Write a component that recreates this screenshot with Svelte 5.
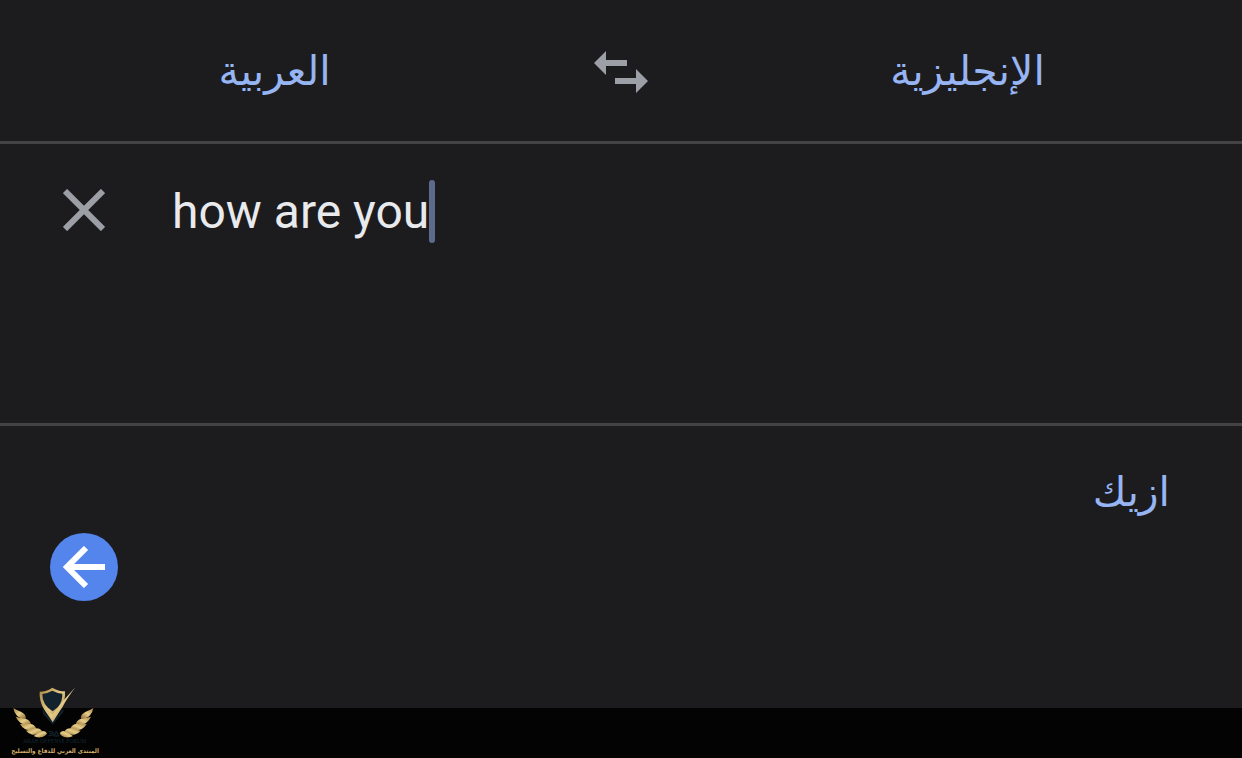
<script lang="ts">
	let source = $state('how are you');
	let languages = $state(['العربية', 'الإنجليزية']);

	const result = 'ازيك';

	// Leaves of one side of the laurel, the other side is mirrored
	const leaves = [
		'M40 114 Q46 119 64 126 Q80 134 77 147 Q58 146 50 136 Q42 127 40 114Z',
		'M47 140 Q58 143 76 146 Q93 151 93 165 Q75 168 62 159 Q52 151 47 140Z',
		'M60 162 Q72 163 89 161 Q106 163 109 177 Q92 184 76 178 Q66 173 60 162Z',
		'M78 182 Q89 180 103 175 Q120 172 126 184 Q114 196 97 194 Q86 192 78 182Z',
		'M101 198 Q110 192 120 185 Q134 179 141 190 Q135 201 121 202 Q110 203 101 198Z'
	];

	function swap() {
		languages = [languages[1], languages[0]];
	}

	function clear() {
		source = '';
	}
</script>

<svelte:head>
	<title>Translate</title>
</svelte:head>

<main class="translator">
	<header class="languages">
		<button class="language" lang="ar" dir="rtl">{languages[0]}</button>
		<button class="swap" aria-label="Swap languages" onclick={swap}>
			<svg viewBox="0 0 54 42" fill="currentColor">
				<path d="M0 12 12 0V9H33V15H12V24Z"></path>
				<path d="M54 30 42 18V27H21V33H42V42Z"></path>
			</svg>
		</button>
		<button class="language" lang="ar" dir="rtl">{languages[1]}</button>
	</header>

	<section class="source">
		<button class="clear" aria-label="Clear text" onclick={clear}>
			<svg viewBox="0 0 42 42" stroke="currentColor" stroke-width="6">
				<path d="M2 2 40 40M40 2 2 40"></path>
			</svg>
		</button>
		<div class="field">
			<input class="source-text" type="text" size="10" aria-label="Text to translate" bind:value={source} />
			<span class="caret"></span>
		</div>
	</section>

	<section class="result">
		<button class="go" aria-label="Open translation">
			<svg viewBox="0 0 42 42" fill="none" stroke="currentColor" stroke-width="6">
				<path d="M42 21H3M23 2 4 21 23 40"></path>
			</svg>
		</button>
		<p class="result-text" lang="ar" dir="rtl">{result}</p>
	</section>

	<footer class="bottom-bar"></footer>

	<!-- Forum watermark -->
	<svg class="watermark" viewBox="0 0 360 264" role="img" aria-label="Arab Defense Forum">
		<defs>
			<linearGradient id="gold" x1="0" y1="0" x2="1" y2="1">
				<stop offset="0" stop-color="#a8843f"></stop>
				<stop offset="0.5" stop-color="#e6cd88"></stop>
				<stop offset="1" stop-color="#8a672f"></stop>
			</linearGradient>
		</defs>
		<path d="M126 115 158 154 190 115 190 126 158 164 129 132Z" fill="#11212c"></path>
		<path d="M157 53Q174 64 195 64Q197 90 183 116L158 156 132 118Q117 91 119 65Q140 65 157 53Z" fill="url(#gold)"></path>
		<path d="M157 62Q172 70 187 71Q188 94 174 111L158 124Q126 104 127 72Q143 70 157 62Z" fill="#12232e"></path>
		<path d="M137 116 158 134Q188 91 226 52Q202 84 188 110L158 156Z" fill="url(#gold)"></path>
		<g fill="url(#gold)">
			{#each leaves as leaf}
				<path d={leaf}></path>
			{/each}
		</g>
		<g fill="url(#gold)" transform="translate(320 0) scale(-1 1)">
			{#each leaves as leaf}
				<path d={leaf}></path>
			{/each}
		</g>
		<path d="M146 185H156Q160 186 160 191Q160 197 154 197H146M149 191H158M162 198 169 184 176 198Z" fill="none" stroke="#142936" stroke-width="3"></path>
		<text class="forum-latin" x="164" y="220">ARAB DEFENSE FORUM</text>
		<text class="forum-arabic" x="165" y="249" lang="ar" direction="rtl">المنتدى العربي للدفاع والتسليح</text>
	</svg>
</main>

<style>
	:global(body) {
		margin: 0;
		background: #1c1c1e;
	}

	.translator {
		position: relative;
		display: grid;
		grid-template-rows: auto 1fr 1fr auto;
		min-height: 100vh;
		background: #1c1c1e;
		color: #e8eaed;
		font-family: Roboto, sans-serif;
	}

	button {
		display: flex;
		align-items: center;
		justify-content: center;
		margin: 0;
		padding: 0;
		border: 0;
		background: none;
		color: #9d9fa6;
		cursor: pointer;
	}

	.languages {
		display: grid;
		grid-template-columns: 1fr 144px 1fr;
		height: 144px;
		border-bottom: 3px solid #434345;
		box-sizing: border-box;
	}

	.language,
	.result-text {
		color: #97b4f3;
		font-family: "DejaVu Sans", sans-serif;
		font-size: 41px;
		line-height: 60px;
	}

	.swap {
		padding-top: 2px;
	}

	.swap svg {
		width: 54px;
		height: 42px;
	}

	.source {
		display: flex;
		align-items: flex-start;
		gap: 64px;
		padding: 36px 60px;
		border-bottom: 3px solid #434345;
	}

	.clear {
		width: 48px;
		height: 60px;
	}

	.clear svg,
	.go svg {
		width: 42px;
		height: 42px;
	}

	.field {
		display: flex;
		flex: 1;
		align-items: center;
		min-width: 0;
	}

	.source-text {
		field-sizing: content;
		min-width: 0;
		padding: 0;
		border: 0;
		outline: none;
		background: none;
		color: inherit;
		font-family: inherit;
		font-size: 48px;
		line-height: 63px;
		caret-color: transparent;
	}

	.caret {
		width: 6px;
		height: 63px;
		border-radius: 3px;
		background: #5c6b8c;
	}

	.result {
		display: flex;
		align-items: center;
		justify-content: space-between;
		padding: 36px 72px 36px 50px;
	}

	.go {
		width: 68px;
		height: 68px;
		border-radius: 50%;
		background: #5385ec;
		color: #fff;
	}

	.result-text {
		align-self: flex-start;
		margin: 0;
	}

	.bottom-bar {
		height: 50px;
		background: #030303;
	}

	.watermark {
		position: absolute;
		bottom: 0;
		left: 0;
		width: 120px;
		height: 88px;
	}

	.forum-latin {
		fill: #142733;
		font-family: "Liberation Serif", serif;
		font-size: 17px;
		text-anchor: middle;
	}

	.forum-arabic {
		fill: #d3b069;
		font-family: "DejaVu Sans Condensed", "DejaVu Sans", sans-serif;
		font-size: 19px;
		font-weight: 700;
		text-anchor: middle;
	}
</style>
